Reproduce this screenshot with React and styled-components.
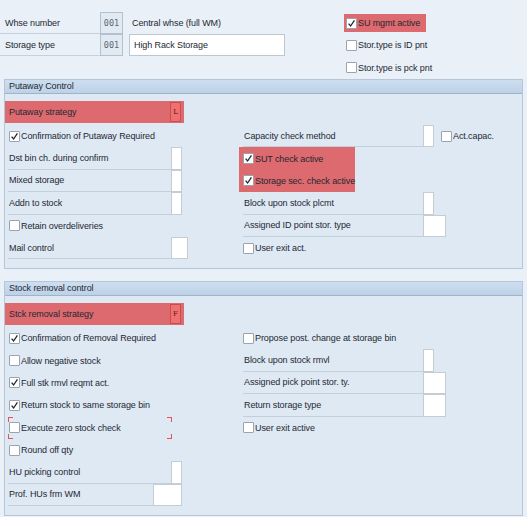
import React from 'react';
import styled, { createGlobalStyle } from 'styled-components';

const Global = createGlobalStyle`
  html, body { margin: 0; padding: 0; background: #e9f0f7; }
  body {
    font-family: "Liberation Sans", Arial, sans-serif;
    font-size: 9px;
    letter-spacing: -0.1px;
    color: #1e2833;
  }
`;

const Page = styled.div`
  width: 527px;
  height: 517px;
  overflow: hidden;
  background: #e9f0f7;
  white-space: nowrap;
`;

/* ---------- top header area ---------- */
const Top = styled.div`
  display: flex;
  height: 79px;
  padding-top: 12px;
  box-sizing: border-box;
`;

const TopLeft = styled.div`
  width: 344px;
  display: flex;
  flex-direction: column;
`;

const TopRow = styled.div`
  display: flex;
  align-items: center;
  height: ${p => p.$h}px;
`;

const TopLabel = styled.div`
  width: 100px;
  height: 100%;
  box-sizing: border-box;
  padding-left: 5px;
  display: flex;
  align-items: center;
  border-bottom: 1px solid #c5d1dd;
`;

const KeyBox = styled.div`
  width: 23px;
  height: 100%;
  box-sizing: border-box;
  background: #e1eaf3;
  border: 1px solid #b3c0cd;
  color: #5b6774;
  display: flex;
  align-items: center;
  justify-content: center;
  font-family: "DejaVu Sans Mono", monospace;
  font-size: 8.5px;
  letter-spacing: 0;
`;

const Desc = styled.div`
  margin-left: 9px;
`;

const TextInput = styled.div`
  margin-left: 6px;
  width: 156px;
  height: 100%;
  box-sizing: border-box;
  background: #fff;
  border: 1px solid #bcc7d2;
  display: flex;
  align-items: center;
  padding-left: 4px;
`;

const TopRight = styled.div`
  display: flex;
  flex-direction: column;
`;

const TopCheckRow = styled.div`
  height: 22.5px;
  display: flex;
  align-items: center;
`;

/* ---------- panels ---------- */
const Panel = styled.section`
  margin: ${p => p.$mt}px 4px 0 4px;
  height: ${p => p.$h}px;
  box-sizing: border-box;
  border: 1px solid #b4c6d8;
  background: #dfe9f3;
  display: flex;
  flex-direction: column;
`;

const PanelHeader = styled.div`
  height: 13px;
  line-height: 13px;
  padding-left: 4px;
  background: linear-gradient(#cddef0, #bed1e6);
  border-bottom: 1px solid #9fb4cb;
  color: #1e2833;
`;

const PanelBody = styled.div`
  padding-top: 7px;
  display: flex;
  flex-direction: column;
`;

const Strategy = styled.div`
  width: 179px;
  height: 22px;
  margin-bottom: 2px;
  background: #dd6a6f;
  display: flex;
  align-items: center;
  padding-left: 4px;
  box-sizing: border-box;
`;

const StrategyLabel = styled.div`
  flex: 1;
`;

const StrategyBox = styled.div`
  width: 11px;
  height: 20px;
  margin-right: 3px;
  box-sizing: border-box;
  background: #f26f70;
  border: 1px solid #c44f53;
  display: flex;
  align-items: center;
  justify-content: center;
  font-family: "DejaVu Serif", serif;
  font-size: 7px;
  color: #3a2020;
`;

const Columns = styled.div`
  display: flex;
`;

const LeftCol = styled.div`
  margin-left: 3px;
  width: 231px;
  display: flex;
  flex-direction: column;
`;

const RightCol = styled.div`
  display: flex;
  flex-direction: column;
`;

const Row = styled.div`
  position: relative;
  height: 22.4px;
  display: flex;
  align-items: center;
  margin-left: ${p => p.$indent || 0}px;
`;

const FieldLabel = styled.div`
  width: ${p => p.$w}px;
  height: 100%;
  box-sizing: border-box;
  padding-left: 1px;
  display: flex;
  align-items: center;
  border-bottom: 1px solid #c2cfdc;
`;

const Field = styled.div`
  width: ${p => p.$w}px;
  height: 100%;
  box-sizing: border-box;
  background: #fff;
  border: 1px solid #c4ccd5;
`;

const Highlight = styled.div`
  width: ${p => p.$w}px;
  background: #dd6a6f;
  display: flex;
  flex-direction: ${p => (p.$col ? 'column' : 'row')};
  align-items: ${p => (p.$col ? 'stretch' : 'center')};
  height: ${p => (p.$h ? p.$h + 'px' : 'auto')};
`;

const CheckWrap = styled.label`
  display: flex;
  align-items: center;
  margin-left: ${p => p.$ml || 0}px;
`;

const Box = styled.span`
  width: 11px;
  height: 11px;
  flex: none;
  box-sizing: border-box;
  background: #fff;
  border: 1px solid #9aa4ae;
  border-radius: 1px;
  margin-right: 1px;
  display: flex;
  align-items: center;
  justify-content: center;
`;

const Corner = styled.span`
  position: absolute;
  width: 4px;
  height: 4px;
  border-color: #e0535c;
  border-style: solid;
  border-width: 0;
  ${p => p.$pos.includes('t') ? 'top: 0;' : 'bottom: 0;'}
  ${p => p.$pos.includes('l') ? 'left: 0;' : 'right: 0;'}
  ${p => p.$pos.includes('t') ? 'border-top-width: 1px;' : 'border-bottom-width: 1px;'}
  ${p => p.$pos.includes('l') ? 'border-left-width: 1px;' : 'border-right-width: 1px;'}
`;

const CornerFrame = styled.span`
  position: absolute;
  left: 0;
  top: 0;
  width: 164px;
  height: 100%;
  pointer-events: none;
`;

function Check({ checked, children, ml }) {
  return (
    <CheckWrap $ml={ml}>
      <Box>
        {checked && (
          <svg width="9" height="9" viewBox="0 0 9 9">
            <path d="M1.6 4.6 L3.6 7 L7.4 1.4" fill="none" stroke="#1e2833" strokeWidth="1.3" />
          </svg>
        )}
      </Box>
      <span>{children}</span>
    </CheckWrap>
  );
}

function LabelField({ label, lw = 163, fw = 11, indent }) {
  return (
    <Row $indent={indent}>
      <FieldLabel $w={lw}>{label}</FieldLabel>
      <Field $w={fw} />
    </Row>
  );
}

function CheckRow({ checked, children, indent, ml = 1 }) {
  return (
    <Row $indent={indent}>
      <Check checked={checked} ml={ml}>{children}</Check>
    </Row>
  );
}

export default function App() {
  return (
    <Page>
      <Global />
      <Top>
        <TopLeft>
          <TopRow $h={22}>
            <TopLabel>Whse number</TopLabel>
            <KeyBox>001</KeyBox>
            <Desc>Central whse (full WM)</Desc>
          </TopRow>
          <TopRow $h={22}>
            <TopLabel>Storage type</TopLabel>
            <KeyBox>001</KeyBox>
            <TextInput>High Rack Storage</TextInput>
          </TopRow>
        </TopLeft>
        <TopRight>
          <TopCheckRow>
            <Highlight $w={82} $h={18}>
              <Check checked ml={2}>SU mgmt active</Check>
            </Highlight>
          </TopCheckRow>
          <TopCheckRow>
            <Check ml={2}>Stor.type is ID pnt</Check>
          </TopCheckRow>
          <TopCheckRow>
            <Check ml={2}>Stor.type is pck pnt</Check>
          </TopCheckRow>
        </TopRight>
      </Top>

      <Panel $mt={0} $h={190}>
        <PanelHeader>Putaway Control</PanelHeader>
        <PanelBody>
          <Strategy>
            <StrategyLabel>Putaway strategy</StrategyLabel>
            <StrategyBox>L</StrategyBox>
          </Strategy>
          <Columns>
            <LeftCol>
              <CheckRow checked>Confirmation of Putaway Required</CheckRow>
              <LabelField label="Dst bin ch. during confirm" />
              <LabelField label="Mixed storage" />
              <LabelField label="Addn to stock" />
              <CheckRow>Retain overdeliveries</CheckRow>
              <LabelField label="Mail control" fw={17} />
            </LeftCol>
            <RightCol>
              <Row $indent={4}>
                <FieldLabel $w={180}>Capacity check method</FieldLabel>
                <Field $w={11} />
                <Check ml={7}>Act.capac.</Check>
              </Row>
              <Highlight $w={116} $col>
                <CheckRow checked indent={4} ml={0}>SUT check active</CheckRow>
                <CheckRow checked indent={4} ml={0}>Storage sec. check active</CheckRow>
              </Highlight>
              <LabelField label="Block upon stock plcmt" lw={180} indent={4} />
              <LabelField label="Assigned ID point stor. type" lw={180} fw={23} indent={4} />
              <CheckRow indent={4} ml={0}>User exit act.</CheckRow>
            </RightCol>
          </Columns>
        </PanelBody>
      </Panel>

      <Panel $mt={12} $h={235}>
        <PanelHeader>Stock removal control</PanelHeader>
        <PanelBody>
          <Strategy>
            <StrategyLabel>Stck removal strategy</StrategyLabel>
            <StrategyBox>F</StrategyBox>
          </Strategy>
          <Columns>
            <LeftCol>
              <CheckRow checked>Confirmation of Removal Required</CheckRow>
              <CheckRow>Allow negative stock</CheckRow>
              <CheckRow checked>Full stk rmvl reqmt act.</CheckRow>
              <CheckRow checked>Return stock to same storage bin</CheckRow>
              <Row>
                <Check ml={1}>Execute zero stock check</Check>
                <CornerFrame>
                  <Corner $pos="tl" />
                  <Corner $pos="tr" />
                  <Corner $pos="bl" />
                  <Corner $pos="br" />
                </CornerFrame>
              </Row>
              <CheckRow>Round off qty</CheckRow>
              <LabelField label="HU picking control" />
              <LabelField label="Prof. HUs frm WM" lw={145} fw={29} />
            </LeftCol>
            <RightCol>
              <CheckRow indent={4} ml={0}>Propose post. change at storage bin</CheckRow>
              <LabelField label="Block upon stock rmvl" lw={180} indent={4} />
              <LabelField label="Assigned pick point stor. ty." lw={180} fw={23} indent={4} />
              <LabelField label="Return storage type" lw={180} fw={23} indent={4} />
              <CheckRow indent={4} ml={0}>User exit active</CheckRow>
            </RightCol>
          </Columns>
        </PanelBody>
      </Panel>
    </Page>
  );
}
